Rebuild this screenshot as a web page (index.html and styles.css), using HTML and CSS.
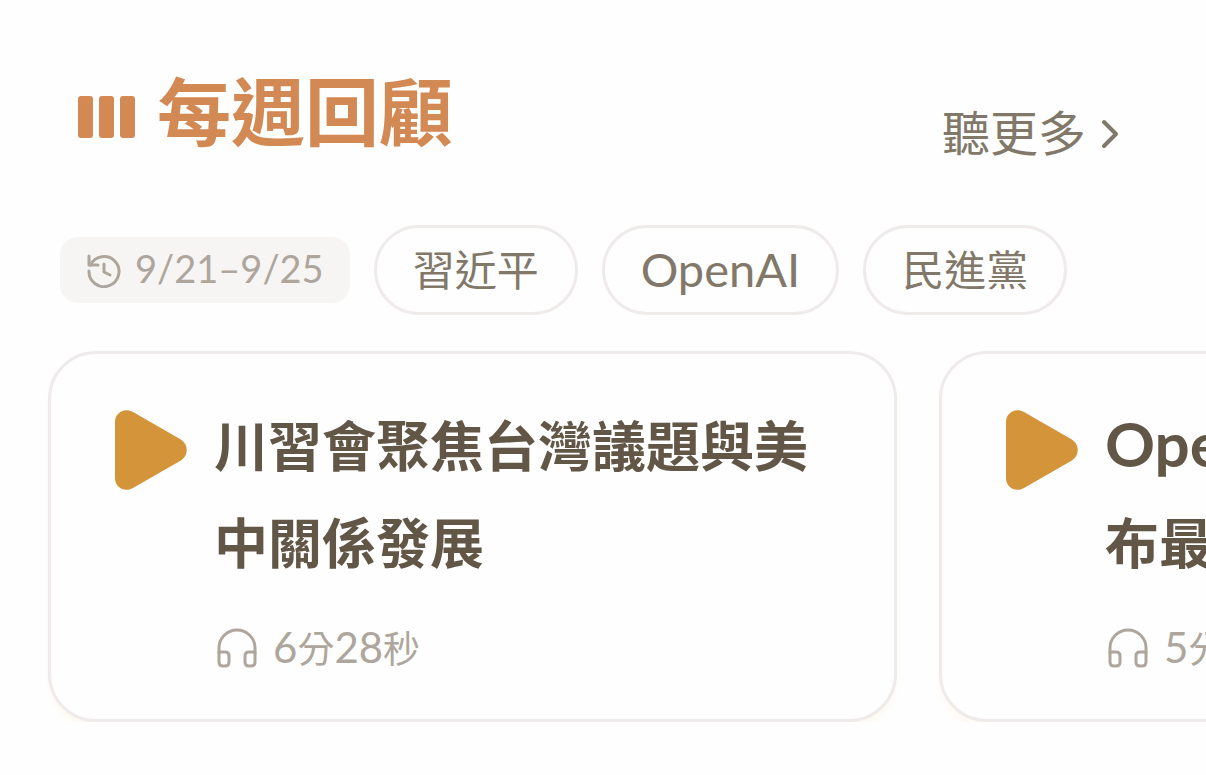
FILE: index.html
```html
<!DOCTYPE html>
<html lang="zh-Hant">
<head>
<meta charset="UTF-8">
<meta name="viewport" content="width=device-width, initial-scale=1.0">
<title>每週回顧</title>
<link rel="stylesheet" href="styles.css">
</head>
<body>
<section class="review">
  <header class="review-header">
    <svg class="bars" width="57" height="42" viewBox="0 0 57 42" aria-hidden="true">
      <rect width="15" height="42" rx="3"/>
      <rect x="21" width="15" height="42" rx="3"/>
      <rect x="42" width="15" height="42" rx="3"/>
    </svg>
    <h1>每週回顧</h1>
    <a class="more" href="#">聽更多
      <svg width="18" height="30" viewBox="0 0 18 30" aria-hidden="true"><path d="M3 3l12 12L3 27"/></svg>
    </a>
  </header>

  <div class="filters">
    <div class="date">
      <svg width="36" height="36" viewBox="0 0 36 36" aria-hidden="true">
        <path d="M3 4v9h9"/>
        <path d="M4.5 13A15 15 0 1 1 3 19"/>
        <path d="M18 12v8l6 3"/>
      </svg>
      <span>9/21–9/25</span>
    </div>
    <button class="chip" type="button">習近平</button>
    <button class="chip chip-latin" type="button">OpenAI</button>
    <button class="chip" type="button">民進黨</button>
  </div>

  <div class="cards">
    <article class="card">
      <button class="play" type="button" aria-label="播放">
        <svg width="72" height="80" viewBox="0 0 72 80"><path d="M0 12C0 3 9-3 18 2L65 29C74 34 74 46 65 51L18 78C9 83 0 77 0 68Z"/></svg>
      </button>
      <div class="card-body">
        <h2>川習會聚焦台灣議題與美中關係發展</h2>
        <p class="length">
          <svg width="40" height="40" viewBox="0 0 40 40" aria-hidden="true">
            <path d="M2 25V20a18 18 0 0 1 36 0v5"/>
            <path d="M2 24h6q4 0 4 4v6q0 4-4 4H6q-4 0-4-4z"/>
            <path d="M38 24h-6q-4 0-4 4v6q0 4 4 4h2q4 0 4-4z"/>
          </svg>
          <span><b>6</b>分<b>28</b>秒</span>
        </p>
      </div>
    </article>
    <article class="card">
      <button class="play" type="button" aria-label="播放">
        <svg width="72" height="80" viewBox="0 0 72 80"><path d="M0 12C0 3 9-3 18 2L65 29C74 34 74 46 65 51L18 78C9 83 0 77 0 68Z"/></svg>
      </button>
      <div class="card-body">
        <h2><span class="latin">OpenAI</span><br>布最新</h2>
        <p class="length">
          <svg width="40" height="40" viewBox="0 0 40 40" aria-hidden="true">
            <path d="M2 25V20a18 18 0 0 1 36 0v5"/>
            <path d="M2 24h6q4 0 4 4v6q0 4-4 4H6q-4 0-4-4z"/>
            <path d="M38 24h-6q-4 0-4 4v6q0 4 4 4h2q4 0 4-4z"/>
          </svg>
          <span><b>5</b>分</span>
        </p>
      </div>
    </article>
  </div>
</section>
</body>
</html>
```
FILE: styles.css
```css
* {
  box-sizing: border-box;
}
body {
  margin: 0;
  background: #fefefe;
  color: #625647;
  font-family: Lato, "Noto Sans CJK TC", sans-serif;
}
h1, h2, p {
  margin: 0;
}
svg {
  flex: none;
  fill: none;
  stroke: currentColor;
  stroke-width: 3;
  stroke-linecap: round;
  stroke-linejoin: round;
}
button {
  font-family: inherit;
  cursor: pointer;
}
.review {
  padding: 62px 0 48px 48px;
  overflow: hidden;
}
.review-header {
  display: flex;
  align-items: center;
  height: 100px;
  padding: 0 87px 0 30px;
  color: #d28953;
}
.bars {
  fill: currentColor;
  stroke: none;
  margin: 10px 22px 0 0;
}
h1 {
  font-size: 74px;
  font-weight: 700;
  line-height: 100px;
}
.more {
  display: flex;
  align-items: center;
  gap: 15px;
  margin: 42px 0 0 auto;
  color: #827869;
  font-size: 48px;
  line-height: 60px;
  text-decoration: none;
}
.more svg {
  margin-top: 2px;
  stroke-width: 4;
}
.filters {
  display: flex;
  align-items: center;
  gap: 24px;
  margin: 63px 0 36px;
  padding-left: 12px;
}
.date {
  display: flex;
  align-items: center;
  gap: 13px;
  height: 66px;
  padding: 0 26px;
  border-radius: 18px;
  background: #f7f5f3;
  color: #aea69c;
  font-size: 38px;
}
.date span {
  padding-bottom: 4px;
}
.chip {
  height: 90px;
  padding: 0 36px 6px;
  border: 3px solid #eeebea;
  border-radius: 45px;
  background: #fefefe;
  color: #827869;
  font-size: 42px;
  white-space: nowrap;
}
.chip-latin {
  padding-bottom: 2px;
  font-size: 47px;
}
/* the row clips the card shadow at its lower edge */
.cards {
  display: grid;
  grid-auto-flow: column;
  grid-auto-columns: calc(100% - 309px);
  gap: 42px;
  margin-left: -48px;
  padding-left: 48px;
  overflow: hidden;
}
.card {
  display: flex;
  align-items: flex-start;
  gap: 27px;
  padding: 46px 48px 46px 64px;
  border: 3px solid #eeebea;
  border-radius: 48px;
  background: #fefefe;
  box-shadow: 0 6px 10px -3px #fdf6ea;
}
.play {
  flex: none;
  margin-top: 10px;
  padding: 0;
  border: 0;
  background: none;
  color: #d4943a;
}
.play svg {
  display: block;
  fill: currentColor;
  stroke: none;
}
h2 {
  margin-top: -2px;
  font-size: 54px;
  font-weight: 700;
  line-height: 97px;
}
.latin {
  font-size: 62px;
  line-height: 1;
}
.length {
  display: flex;
  align-items: center;
  gap: 16px;
  margin-top: 31px;
  padding-left: 3px;
  color: #aea69c;
  font-size: 37px;
  line-height: 48px;
}
.length b {
  font-size: 42px;
  font-weight: 400;
}
```
